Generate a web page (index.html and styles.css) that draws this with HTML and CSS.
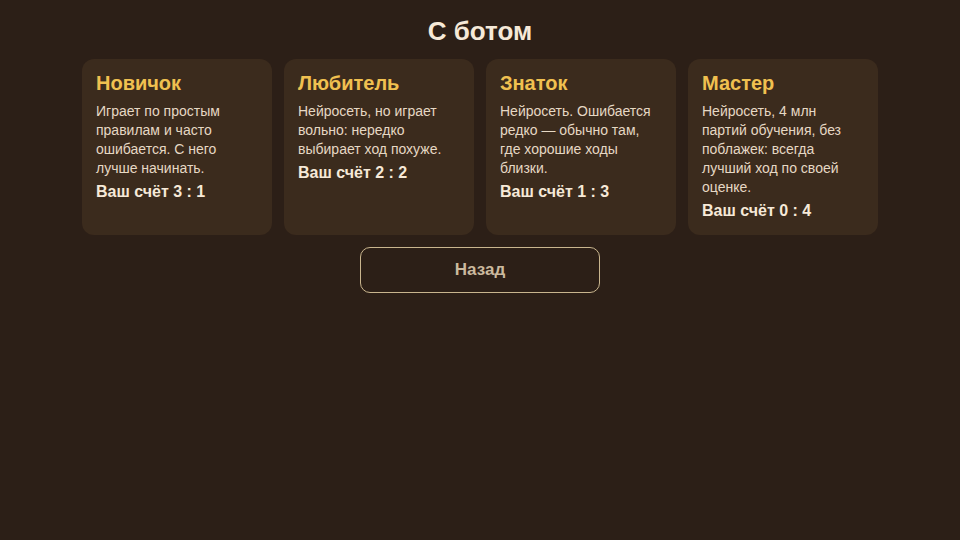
FILE: index.html
```html
<!DOCTYPE html>
<html lang="ru">
<head>
<meta charset="utf-8">
<link rel="stylesheet" href="styles.css">
</head>
<body>
<main class="screen">
  <h1 class="title">С ботом</h1>
  <div class="cards">
    <div class="card">
      <div class="card-name">Новичок</div>
      <div class="card-desc">Играет по простым правилам и часто ошибается. С него лучше начинать.</div>
      <div class="card-score">Ваш счёт 3 : 1</div>
    </div>
    <div class="card">
      <div class="card-name">Любитель</div>
      <div class="card-desc">Нейросеть, но играет вольно: нередко выбирает ход похуже.</div>
      <div class="card-score">Ваш счёт 2 : 2</div>
    </div>
    <div class="card">
      <div class="card-name">Знаток</div>
      <div class="card-desc">Нейросеть. Ошибается редко — обычно там, где хорошие ходы близки.</div>
      <div class="card-score">Ваш счёт 1 : 3</div>
    </div>
    <div class="card">
      <div class="card-name">Мастер</div>
      <div class="card-desc">Нейросеть, 4 млн партий обучения, без поблажек: всегда лучший ход по своей оценке.</div>
      <div class="card-score">Ваш счёт 0 : 4</div>
    </div>
  </div>
  <button class="back">Назад</button>
</main>
</body>
</html>
```
FILE: styles.css
```css
html, body {
  margin: 0;
  padding: 0;
  background: #2c1f17;
  width: 960px;
  height: 540px;
  overflow: hidden;
  font-family: "Liberation Sans", Arial, sans-serif;
}
.screen {
  display: flex;
  flex-direction: column;
  align-items: center;
  padding-top: 15px;
}
.title {
  margin: 0;
  font-size: 26px;
  line-height: 32px;
  font-weight: 700;
  color: #f6e9d8;
}
.cards {
  display: flex;
  gap: 12px;
  margin-top: 12px;
}
.card {
  width: 190px;
  height: 176px;
  box-sizing: border-box;
  padding: 12px 14px;
  border-radius: 12px;
  background: #3b2b1d;
}
.card-name {
  font-size: 20px;
  font-weight: 700;
  line-height: 24px;
  color: #f0c050;
  margin-bottom: 7px;
}
.card-desc {
  font-size: 14px;
  line-height: 19px;
  color: #e6d8c4;
}
.card-score {
  margin-top: 4px;
  font-size: 16px;
  font-weight: 700;
  line-height: 20px;
  color: #f6e9d8;
}
.back {
  margin-top: 12px;
  width: 240px;
  height: 46px;
  border: 1px solid #c9b58e;
  border-radius: 10px;
  background: transparent;
  color: #cbb99e;
  font-family: "Liberation Sans", Arial, sans-serif;
  font-size: 17px;
  font-weight: 700;
}
```
